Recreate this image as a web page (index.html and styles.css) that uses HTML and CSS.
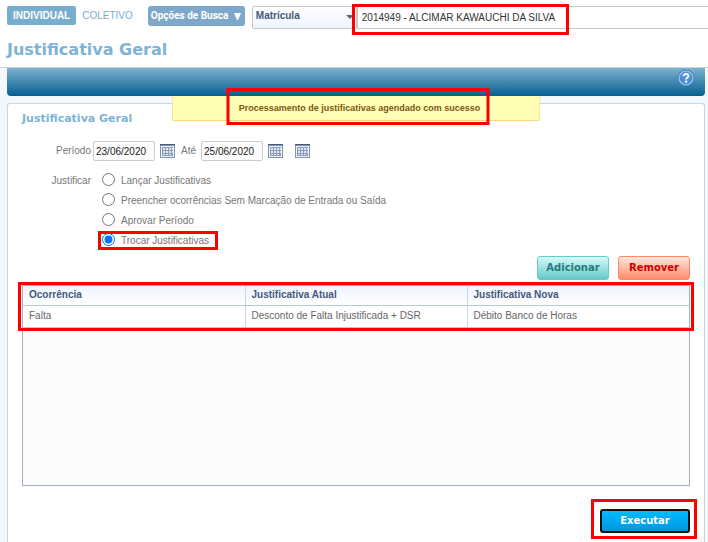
FILE: index.html
```html
<!DOCTYPE html>
<html lang="pt-BR">
<head>
<meta charset="utf-8">
<meta name="viewport" content="width=device-width, initial-scale=1">
<title>Justificativa Geral</title>
<link rel="stylesheet" href="styles.css">
</head>
<body>
<svg class="symbols" aria-hidden="true">
  <symbol id="calendar" viewBox="0 0 15 14">
    <path fill="#7f93b3" d="M0 0h15v14H0z"/>
    <path fill="#44597c" d="M0 0h15v1H0z"/>
    <path fill="#eef1f6" d="M1 2h13v11H1z"/>
    <path fill="#8d9cb8" d="M2 3h11v9H2z"/>
    <path fill="#e3e8f1" d="M3 4h2v2H3zM6 4h2v2H6zM9 4h2v2H9zM3 7h2v2H3zM6 7h2v2H6zM9 7h2v2H9zM3 10h2v1H3zM6 10h2v1H6zM9 10h2v1H9zM12 4h1v2h-1zM12 7h1v2h-1z"/>
  </symbol>
</svg>
<header class="header">
  <div class="search">
    <nav class="tabs">
      <a class="tab tab-active" href="#individual">INDIVIDUAL</a>
      <a class="tab" href="#coletivo">COLETIVO</a>
    </nav>
    <button class="search-options" type="button">Opções de Busca <svg width="7" height="7" viewBox="0 0 7 7" aria-hidden="true"><path fill="#fff" d="M0 0h7L4 7H3z"/></svg></button>
    <div class="select">
      <select aria-label="Tipo de busca"><option>Matrícula</option></select>
      <svg class="select-arrow" width="8" height="4" viewBox="0 0 8 4" aria-hidden="true"><path fill="#666" d="M0 0h8L4 4z"/></svg>
    </div>
    <div class="employee">
      <input type="text" aria-label="Funcionário" value="2014949 - ALCIMAR KAWAUCHI DA SILVA">
      <span class="mark mark-employee"></span>
    </div>
  </div>
  <h1>Justificativa Geral</h1>
</header>
<main class="main">
  <div class="toolbar">
    <button class="help" type="button" aria-label="Ajuda"><svg width="18" height="18" viewBox="0 0 18 18" aria-hidden="true">
      <circle cx="9" cy="9" r="8.300" fill="#2f72bb"/>
      <circle cx="9" cy="9" r="7" fill="#4b8fd0" stroke="#a5cdf0" stroke-width="1.200"/>
      <path fill="none" stroke="#fff" stroke-width="1.900" d="M6.600 7.300C6.600 5.600 7.600 5 9 5s2.500.7 2.500 2c0 1.600-2.400 1.500-2.400 3.500"/>
      <path fill="#fff" d="M8 11.600h2.200v2H8z"/>
    </svg></button>
    <p class="message" role="status"><span class="marked">Processamento de justificativas agendado com sucesso<span class="mark mark-message"></span></span></p>
  </div>
  <form class="panel">
    <h2>Justificativa Geral</h2>
    <div class="fields">
      <label class="field-label" for="from">Período</label>
      <div class="period">
        <input id="from" type="text" value="23/06/2020">
        <button class="calendar" type="button" aria-label="Data inicial"><svg width="15" height="14"><use href="#calendar"/></svg></button>
        <label for="to">Até</label>
        <input id="to" type="text" value="25/06/2020">
        <button class="calendar" type="button" aria-label="Data final"><svg width="15" height="14"><use href="#calendar"/></svg></button>
        <button class="calendar" type="button" aria-label="Selecionar período"><svg width="15" height="14"><use href="#calendar"/></svg></button>
      </div>
      <span class="field-label" id="justify">Justificar</span>
      <div class="options" role="radiogroup" aria-labelledby="justify">
        <label class="option"><input type="radio" name="action"><span>Lançar Justificativas</span></label>
        <label class="option"><input type="radio" name="action"><span>Preencher ocorrências Sem Marcação de Entrada ou Saída</span></label>
        <label class="option"><input type="radio" name="action"><span>Aprovar Período</span></label>
        <label class="option marked"><input type="radio" name="action" checked><span>Trocar Justificativas</span><span class="mark mark-option"></span></label>
      </div>
    </div>
    <div class="actions">
      <button class="button button-add" type="button">Adicionar</button>
      <button class="button button-remove" type="button">Remover</button>
    </div>
    <div class="grid">
      <table>
        <thead><tr><th>Ocorrência</th><th>Justificativa Atual</th><th>Justificativa Nova</th></tr></thead>
        <tbody><tr><td>Falta</td><td>Desconto de Falta Injustificada + DSR</td><td>Débito Banco de Horas</td></tr></tbody>
      </table>
      <span class="mark mark-table"></span>
    </div>
    <div class="submit">
      <span class="marked"><button class="button button-run" type="button">Executar</button><span class="mark mark-run"></span></span>
    </div>
  </form>
</main>
</body>
</html>
```
FILE: styles.css
```css
* {
  box-sizing: border-box;
}

body {
  display: flex;
  flex-direction: column;
  min-height: 100vh;
  margin: 0;
  background: #f3f8fc;
  color: #777;
  font: 10px/14px "Liberation Sans", Arial, sans-serif;
}

h1, h2, p {
  margin: 0;
}

h1, h2 {
  color: #7db3d6;
  font-family: "DejaVu Sans", Verdana, sans-serif;
  font-weight: bold;
}

button, input, select {
  margin: 0;
  font: inherit;
}

svg {
  display: block;
}

.symbols {
  position: absolute;
  width: 0;
  height: 0;
}

/* Red call-out frames drawn over the highlighted items */
.marked, .employee, .grid {
  position: relative;
}

.mark {
  position: absolute;
  z-index: 2;
  border: 3px solid #f00;
  pointer-events: none;
}

.mark-employee { inset: -2px auto -6px -5px; width: 217px; }
.mark-message { inset: -13px -9px -10px -12px; }
.mark-option { inset: 0 -9px 1px -4px; }
.mark-table { top: -4px; left: -5px; right: -5px; height: 49px; }
.mark-run { inset: -10px -7px -6px -9px; }

.header {
  padding: 6px 0 6px 7px;
  border-bottom: 1px solid #c3d9ea;
  background: #fff;
}

.search {
  display: flex;
  align-items: flex-start;
}

.tabs {
  display: flex;
}

.tab {
  padding: 0 6px;
  border-radius: 2px;
  color: #7aaccf;
  line-height: 19px;
  text-decoration: none;
}

.tab-active {
  background: #79adce;
  color: #fff;
  font-weight: bold;
}

.search-options {
  display: flex;
  align-items: center;
  justify-content: space-between;
  width: 97px;
  height: 20px;
  margin: 0 7px 0 9px;
  padding: 0 4px 0 3px;
  border: 0;
  border-radius: 3px;
  background: #7ea8ca;
  color: #fff;
  font-family: Roboto, "Liberation Sans", sans-serif;
  font-weight: bold;
  white-space: nowrap;
}

.select {
  position: relative;
  width: 105px;
}

.select select {
  width: 100%;
  height: 23px;
  padding: 0 3px 3px;
  border: 1px solid #c8c8c8;
  border-radius: 2px;
  appearance: none;
  background: linear-gradient(#fff, #eef3fd);
  color: #43597c;
  font-weight: bold;
}

.select-arrow {
  position: absolute;
  top: 9px;
  right: 3px;
  pointer-events: none;
}

.employee {
  flex: 1;
}

.employee input {
  width: 100%;
  height: 23px;
  padding: 0 4px;
  border: 1px solid #c8c8c8;
  border-right: 0;
  background: #fff;
  color: #333;
}

h1 {
  margin-top: 10px;
  font-size: 16px;
  line-height: 22px;
}

.main {
  display: flex;
  flex: 1;
  flex-direction: column;
  gap: 7px;
  padding: 0 3px 0 7px;
}

.toolbar {
  position: relative;
  display: flex;
  justify-content: flex-end;
  height: 28px;
  padding: 0 10px;
  border-radius: 0 0 4px 4px;
  background: linear-gradient(#7db1d0, #04608f);
}

.help {
  width: 18px;
  height: 18px;
  margin-top: 1px;
  padding: 0;
  border: 0;
  background: none;
}

.message {
  position: absolute;
  top: 100%;
  left: 50%;
  width: 369px;
  height: 25px;
  padding-left: 7px;
  transform: translateX(-50%);
  border: 1px solid #fbd57c;
  border-top: 0;
  border-radius: 0 0 3px 3px;
  background: #ffffb5;
  color: #7d5512;
  font-size: 9px;
  font-weight: bold;
  line-height: 24px;
  text-align: center;
}

.message .marked {
  display: inline-block;
  line-height: 14px;
}

.panel {
  display: flex;
  flex: 1;
  flex-direction: column;
  padding: 7px 14px 9px;
  border: 1px solid #c3d9ea;
  border-bottom: 0;
  border-radius: 3px 3px 0 0;
  background: #fff;
}

h2 {
  font-size: 11px;
  line-height: 16px;
}

.fields {
  display: grid;
  grid-template-columns: 69px 1fr;
  gap: 10px 2px;
  margin-top: 14px;
}

.field-label {
  line-height: 20px;
  text-align: right;
}

.period {
  display: flex;
  align-items: center;
}

.period input {
  width: 62px;
  height: 20px;
  padding: 0 2px;
  border: 1px solid #ccc;
  border-radius: 2px;
  background: #fcfcfc;
  color: #222;
}

.period label {
  margin: 0 5px 0 6px;
}

.calendar {
  width: 15px;
  height: 14px;
  margin: 0 0 1px 5px;
  padding: 0;
  border: 0;
  background: none;
}

.calendar + .calendar {
  margin-left: 12px;
}

.options {
  display: flex;
  flex-direction: column;
  align-items: flex-start;
  padding-left: 9px;
}

.option {
  display: flex;
  align-items: center;
  gap: 6px;
  height: 20px;
}

.option input {
  width: 13px;
  height: 13px;
  margin-bottom: 3px;
}

.actions {
  display: flex;
  justify-content: flex-end;
  gap: 9px;
  margin-top: 5px;
}

.button {
  width: 72px;
  height: 24px;
  padding: 0;
  border: 1px solid;
  border-radius: 3px;
  font: bold 10px/14px "DejaVu Sans", Verdana, sans-serif;
}

.button-add {
  border-color: #69cbc9;
  background: linear-gradient(#d5fafa, #65c9c8);
  color: #247b79;
}

.button-remove {
  border-color: #fb8a68;
  background: linear-gradient(#ffe6de, #ff8c6a);
  color: #c00;
}

.grid {
  flex: 1;
  margin-top: 5px;
  border: 1px solid #a3b0c2;
  background: #fcfcfc;
}

table {
  width: 100%;
  border-collapse: collapse;
  table-layout: fixed;
}

th, td {
  height: 19px;
  padding: 0 6px;
  border-bottom: 1px solid #b9c8d8;
  border-left: 1px solid #ccd6e2;
  text-align: left;
}

th {
  background: linear-gradient(#eef3fd, #fff);
  color: #43597c;
}

td {
  height: 22px;
  background: #fff;
  color: #666;
}

th:first-child, td:first-child {
  border-left: 0;
}

.submit {
  display: flex;
  justify-content: flex-end;
  margin-top: 23px;
}

.button-run {
  display: block;
  width: 90px;
  border: 2px solid #111;
  background: linear-gradient(#00baff, #0096e0);
  color: #fff;
}
```
